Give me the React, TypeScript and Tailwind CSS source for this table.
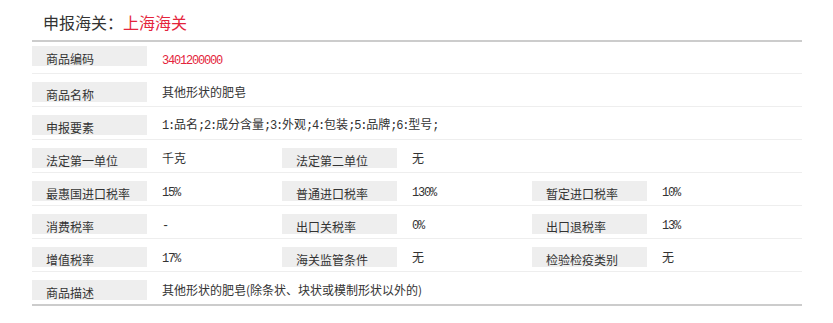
import React from 'react'

type Pair = [string, string]

const rows: { cells: Pair[]; red?: boolean }[] = [
  { cells: [['商品编码', '3401200000']], red: true },
  { cells: [['商品名称', '其他形状的肥皂']] },
  { cells: [['申报要素', '1:品名;2:成分含量;3:外观;4:包装;5:品牌;6:型号;']] },
  { cells: [['法定第一单位', '千克'], ['法定第二单位', '无']] },
  { cells: [['最惠国进口税率', '15%'], ['普通进口税率', '130%'], ['暂定进口税率', '10%']] },
  { cells: [['消费税率', '-'], ['出口关税率', '0%'], ['出口退税率', '13%']] },
  { cells: [['增值税率', '17%'], ['海关监管条件', '无'], ['检验检疫类别', '无']] },
  { cells: [['商品描述', '其他形状的肥皂(除条状、块状或模制形状以外的)']] },
]

const ASCII = /^[0-9%:;\-]+$/

// digits and punctuation get a narrow mono face, like the old bitmap font
function Txt({ s }: { s: string }) {
  const numeric = ASCII.test(s)
  const parts = s.split(/([0-9%:;\-]+)/)
  return (
    <>
      {parts.map((p, i) =>
        ASCII.test(p) ? (
          <span
            key={i}
            className={`font-['Liberation_Mono',monospace] tracking-[-1.2px] ${numeric ? 'align-[-2px]' : ''}`}
          >
            {p}
          </span>
        ) : (
          <span key={i}>{p}</span>
        )
      )}
    </>
  )
}

export default function App() {
  return (
    <div className="bg-white min-h-[323px] font-['Noto_Sans_CJK_SC','Liberation_Sans',sans-serif] text-[#333]">
      <div className="w-[770px] ml-[32px] border-b-2 border-[#ccc]">
        <div className="h-[42px] pt-[14px] pl-[11px] text-[16px] leading-4 border-b-2 border-[#ccc]">
          申报海关：<span className="text-[#e4243c]">上海海关</span>
        </div>

        {rows.map((r, i) => {
          const first = i === 0
          const last = i === rows.length - 1
          return (
            <div
              key={i}
              className={`flex ${first || last ? 'h-[32px]' : 'h-[33px]'} ${last ? '' : 'border-b border-[#eee]'}`}
            >
              {r.cells.map(([label, value], j) => (
                <div key={j} className={`flex ${r.cells.length === 1 ? 'flex-1' : 'w-[250px]'}`}>
                  <div
                    className={`w-[115px] h-5 shrink-0 bg-[#eee] pl-[14px] pt-[6px] text-[12px] leading-[14px] ${first ? 'mt-1' : 'mt-2'}`}
                  >
                    {label}
                  </div>
                  <div
                    className={`flex items-center pl-[15px] pt-[3px] text-[12px] leading-[12px] whitespace-nowrap ${r.red ? 'text-[#e4243c]' : ''}`}
                  >
                    <div><Txt s={value} /></div>
                  </div>
                </div>
              ))}
            </div>
          )
        })}
      </div>
    </div>
  )
}
